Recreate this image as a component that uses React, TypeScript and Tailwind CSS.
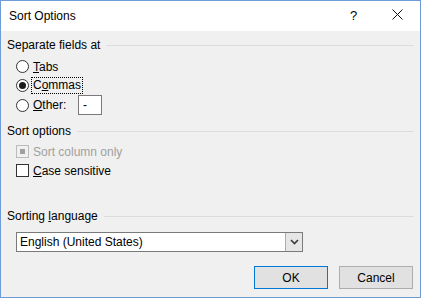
import React from "react";

const font = "font-['Segoe_UI','Liberation_Sans',sans-serif]";

function Header({ label, mnemonicIndex }: { label: string; mnemonicIndex?: number }) {
  return (
    <div className="flex items-center h-4 pl-[6px] pr-[6px]">
      <span className="text-[12px] leading-4 text-black whitespace-nowrap">
        {mnemonicIndex === undefined ? (
          label
        ) : (
          <>
            {label.slice(0, mnemonicIndex)}
            <span className="underline">{label[mnemonicIndex]}</span>
            {label.slice(mnemonicIndex + 1)}
          </>
        )}
      </span>
      <div className="flex-1 h-px bg-[#dcdcdc] ml-[6px]" />
    </div>
  );
}

function Radio({ checked }: { checked?: boolean }) {
  return (
    <div className="w-[13px] h-[13px] rounded-full border border-[#333333] bg-white flex items-center justify-center shrink-0">
      {checked && <div className="w-[7px] h-[7px] rounded-full bg-[#1a1a1a]" />}
    </div>
  );
}

export default function App() {
  return (
    <div className={`w-[421px] h-[298px] border border-[#6f9bd8] flex flex-col ${font} text-black`}>
      <div className="h-[30px] bg-white flex items-center pl-[8px] relative">
        <span className="text-[12px] leading-4">Sort Options</span>
        <span className="absolute left-[349px] top-[7px] text-[13px] leading-4">?</span>
        <svg className="absolute left-[391px] top-[8px]" width="11" height="11" viewBox="0 0 11 11">
          <path d="M0.5 0.5 L10.5 10.5 M10.5 0.5 L0.5 10.5" stroke="#111" strokeWidth="1" />
        </svg>
      </div>
      <div className="flex-1 bg-[#f0f0f0] flex flex-col pt-[6px]">
        <Header label="Separate fields at" />
        <div className="flex flex-col mt-[4px] pl-[15px]">
          <div className="h-[19px] flex items-center">
            <Radio />
            <span className="ml-[4px] text-[12px] leading-4">
              <span className="underline">T</span>abs
            </span>
          </div>
          <div className="h-[19px] flex items-center">
            <Radio checked />
            <span className="ml-[2px] px-[1px] text-[12px] leading-[15px] border border-dotted border-black">
              C<span className="underline">o</span>mmas
            </span>
          </div>
          <div className="h-[20px] flex items-center">
            <Radio />
            <span className="ml-[4px] w-[45px] text-[12px] leading-4">
              <span className="underline">O</span>ther:
            </span>
            <div className="w-[24px] h-[20px] bg-white border border-[#7a7a7a] flex items-center pl-[4px] text-[12px]">
              -
            </div>
          </div>
        </div>
        <div className="mt-[8px]">
          <Header label="Sort options" />
        </div>
        <div className="flex flex-col mt-[3px] pl-[15px]">
          <div className="h-[19px] flex items-center">
            <div className="w-[13px] h-[13px] border border-[#bcbcbc] bg-[#f0f0f0] flex items-center justify-center">
              <div className="w-[5px] h-[5px] bg-[#a0a0a0]" />
            </div>
            <span className="ml-[4px] text-[12px] leading-4 text-[#a0a0a0]">Sort column only</span>
          </div>
          <div className="h-[19px] flex items-center">
            <div className="w-[13px] h-[13px] border border-[#333333] bg-white" />
            <span className="ml-[4px] text-[12px] leading-4">
              <span className="underline">C</span>ase sensitive
            </span>
          </div>
        </div>
        <div className="mt-[28px]">
          <Header label="Sorting language" mnemonicIndex={8} />
        </div>
        <div className="mt-[8px] ml-[15px] w-[287px] h-[20px] bg-white border border-[#7a7a7a] flex items-center">
          <span className="flex-1 pl-[3px] text-[12px] leading-4">English (United States)</span>
          <div className="w-[17px] h-full bg-[#e6e6e6] border-l border-[#acacac] flex items-center justify-center">
            <svg width="9" height="6" viewBox="0 0 9 6">
              <path d="M1 1 L4.5 4.5 L8 1" stroke="#3a3a3a" strokeWidth="1.6" fill="none" />
            </svg>
          </div>
        </div>
        <div className="mt-[14px] flex justify-end gap-[11px] pr-[7px]">
          <button className="w-[74px] h-[23px] bg-[#e1e1e1] border border-[#0078d7] text-[12px] leading-4">OK</button>
          <button className="w-[74px] h-[23px] bg-[#e1e1e1] border border-[#adadad] text-[12px] leading-4">Cancel</button>
        </div>
      </div>
    </div>
  );
}
